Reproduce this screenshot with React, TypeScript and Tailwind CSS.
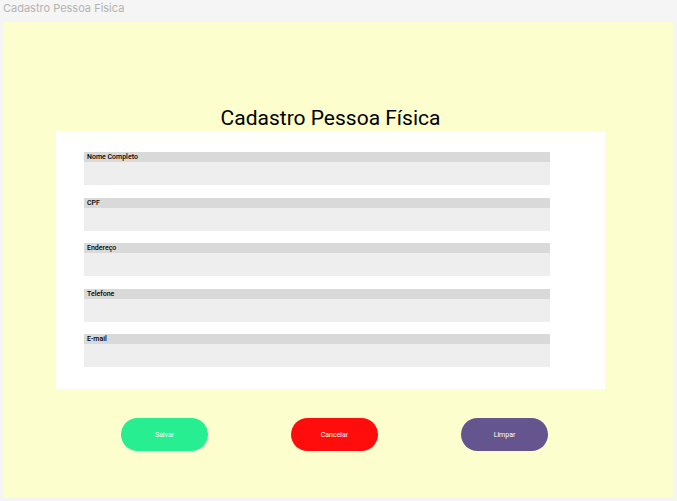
const fields = [
  { id: 'nome', label: 'Nome Completo', type: 'text' },
  { id: 'cpf', label: 'CPF', type: 'text' },
  { id: 'endereco', label: 'Endereço', type: 'text' },
  { id: 'telefone', label: 'Telefone', type: 'tel' },
  { id: 'email', label: 'E-mail', type: 'email' },
];

const buttonBase = 'h-[33px] w-[87px] rounded-full pt-0.5 text-[7px] leading-none text-white';

export default function App() {
  return (
    <div className="min-h-screen bg-[#f5f5f5] pr-1 pl-[3px] font-['Roboto',sans-serif]">
      <header className="flex h-[22px] items-start pt-0.5 text-[11px] leading-3 text-[#b3b3b3] font-['Inter',sans-serif]">
        Cadastro Pessoa Fisica
      </header>
      <main className="min-h-[476px] bg-[#fdfecd] pt-[84px] pr-[68px] pl-[53px]">
        <form>
          <h1 className="text-center text-[21px] leading-[25px] text-black">
            Cadastro Pessoa Física
          </h1>
          <div className="flex min-h-[258px] flex-col justify-between bg-white pt-[21px] pr-[55px] pb-[22px] pl-7">
            {fields.map((field) => (
              <div key={field.id} className="flex flex-col">
                <label
                  htmlFor={field.id}
                  className="bg-[#d9d9d9] pl-[3px] text-[7px] leading-[10px] font-medium text-black"
                >
                  {field.label}
                </label>
                <input
                  id={field.id}
                  type={field.type}
                  className="h-[23px] w-full bg-[#eeeeee] px-1 text-[10px] outline-none"
                />
              </div>
            ))}
          </div>
          <div className="mt-[29px] flex justify-between pr-[57px] pl-[65px]">
            <button type="submit" className={`${buttonBase} bg-[#27ef91]`}>Salvar</button>
            <button type="button" className={`${buttonBase} bg-[#ff0d0d]`}>Cancelar</button>
            <button type="reset" className={`${buttonBase} bg-[#65558f]`}>Limpar</button>
          </div>
        </form>
      </main>
    </div>
  );
}
